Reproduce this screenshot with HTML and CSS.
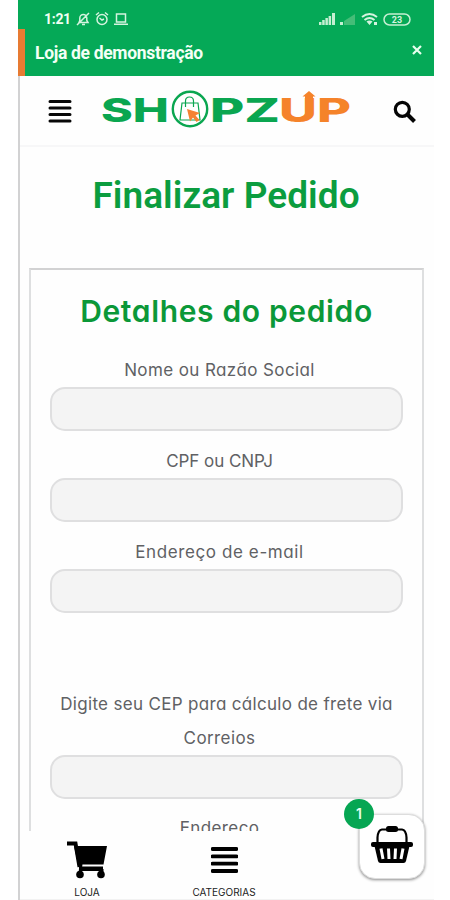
FILE: index.html
```html
<!DOCTYPE html>
<html lang="pt-BR">
<head>
<meta charset="utf-8">
<title>Finalizar Pedido</title>
<link rel="stylesheet" href="styles.css">
</head>
<body>
<div class="phone">
  <div class="status">
    <span class="clock">1:21</span>
    <svg class="status-icons" width="54" height="16" viewBox="0 0 54 16" fill="none" stroke="#d5f3df" stroke-width="1.5">
      <path d="M3 11.5h9l-1.200-2V7a3.500 3.500 0 0 0-7 0v2.500zM6 13.500h3M1 14L13 2"/>
      <circle cx="26" cy="8.500" r="5"/><path d="M23.500 7l2.500 2 2-1M20 4l3-2.500M32 4l-3-2.500"/>
      <path d="M40.500 3h9v8h-9zM38 13.300h14"/>
    </svg>
    <svg class="signals" width="94" height="16" viewBox="0 0 94 16">
      <g fill="#c5efd2"><path d="M1 11h2.500v3H1zM4.200 9h2.500v5H4.200zM7.400 7h2.500v7H7.400zM10.600 5h2.500v9h-2.500zM14 2h3v12h-3z"/><path d="M22 11h3v3h-3z"/></g>
      <path d="M26 10l11-7v11H26z" fill="#45bd78"/>
      <g fill="none" stroke="#d5f3df" stroke-width="2"><path d="M44 6q7.500-6 15 0M46.500 9q5-4 10 0"/></g>
      <path d="M48.500 10.500q3-2 6 0L51.500 14zM56 11h3v3h-3z" fill="#d5f3df"/>
      <rect x="66" y="3" width="26" height="11" rx="5.500" fill="none" stroke="#c5efd2" stroke-width="1.500"/>
      <text x="79" y="12" class="battery" text-anchor="middle">23</text>
    </svg>
  </div>
  <div class="notice"><span>Loja de demonstração</span>
    <svg class="close" width="10" height="10" viewBox="0 0 10 10"><path d="M1 1l8 8M9 1L1 9" stroke="#e8ffef" stroke-width="2.200"/></svg>
  </div>
  <header class="header">
    <svg class="menu" width="24" height="23" viewBox="0 0 24 23"><path d="M2 1.500h20M2 8h20M2 14.500h20M2 21h20" stroke="#080808" stroke-width="3" stroke-linecap="round"/></svg>
    <svg class="logo" width="250" height="40" viewBox="0 0 250 40">
      <g class="wordmark">
        <text x="-1" y="31.500" textLength="68" lengthAdjust="spacingAndGlyphs">SH</text>
        <text x="108" y="31.500" textLength="70" lengthAdjust="spacingAndGlyphs">PZ</text>
        <text class="up" x="177" y="31.500" textLength="72" lengthAdjust="spacingAndGlyphs">UP</text>
      </g>
      <circle cx="88" cy="19" r="17.200" fill="#fff" stroke="#0aa650" stroke-width="2.400"/>
      <path d="M80 13h16l2 17H78z" fill="none" stroke="#0aa650" stroke-width="1.200"/>
      <path d="M83.500 17v-6q0-4 4-4t4 4v6" fill="none" stroke="#0aa650" stroke-width="1.200"/>
      <path d="M85 19l13 4-4.500 2.500 4 4.500-3 2-3.500-4.500-3 4z" fill="#f58233"/>
      <path d="M200.500 6.500l6.500-5.500 6.500 5.500h-2.500V14h-8V6.500z" fill="#f5832a"/>
    </svg>
    <svg class="search" width="24" height="24" viewBox="0 0 24 24"><circle cx="9.300" cy="9.300" r="7" fill="none" stroke="#050505" stroke-width="3.200"/><path d="M14.500 14.500l7 7" stroke="#050505" stroke-width="4"/></svg>
  </header>
  <h1>Finalizar Pedido</h1>
  <main class="order">
    <h2>Detalhes do pedido</h2>
    <div class="field"><label class="l1" for="nome">Nome ou Razão Social</label><input id="nome"></div>
    <div class="field cpf"><label class="l2" for="cpf">CPF ou CNPJ</label><input id="cpf"></div>
    <div class="field"><label class="l3" for="email">Endereço de e-mail</label><input id="email"></div>
    <div class="field cep"><label for="cep"><span class="l4">Digite seu CEP para cálculo de frete via</span><br><span class="l5">Correios</span></label><input id="cep"></div>
    <div class="field last"><label class="l6">Endereço</label></div>
  </main>
  <nav class="nav">
    <div class="tab shop">
      <svg width="42" height="39" viewBox="0 0 42 39"><path d="M1 3.500h8.500l4 23.500" fill="none" stroke="#000" stroke-width="4"/><path d="M8 6h33l-3.500 18.500H12zM13 26.500h24V31H13z"/><path d="M15 23.500L14 34M36 29v5" stroke="#000" stroke-width="3"/><circle cx="14" cy="34.500" r="3.800"/><circle cx="35" cy="34.500" r="3.800"/></svg>
      <span>LOJA</span>
    </div>
    <div class="tab cats">
      <svg width="27" height="39" viewBox="0 0 27 39"><path d="M1.500 9h24M1.500 16.300h24M1.500 23.700h24M1.500 31h24" stroke="#000" stroke-width="3.800" stroke-linecap="round"/></svg>
      <span>CATEGORIAS</span>
    </div>
  </nav>
  <div class="basket">
    <svg width="42" height="38" viewBox="0 0 42 38"><path d="M6.500 17V12.500Q7 5 11 4.500h20Q35 5 35.500 12.500V17" fill="none" stroke="#000" stroke-width="2.200"/><rect x="15" y="1" width="12" height="6" rx="2.500"/><rect x="0" y="17" width="42" height="5" rx="2"/><path d="M3.500 21h35L35 36q-.500 2-2.500 2h-23Q7.500 38 7 36z"/><path d="M10 23.500l2 10.500M17.500 23.500l.5 10.500M24.500 23.500l-.5 10.500M32 23.500l-2 10.500" stroke="#fff" stroke-width="3"/></svg>
    <span class="badge">1</span>
  </div>
</div>
</body>
</html>
```
FILE: styles.css
```css
* { box-sizing: border-box; }
body { margin: 0; background: #fff; font-family: Inter, sans-serif; }
.phone { position: relative; width: 416px; height: 900px; margin-left: 18px; overflow: hidden; background: linear-gradient(90deg, #d2d2d3 0 2px, #fefefe 2px); display: flex; flex-direction: column; }
.status { height: 29px; flex: none; background: #05a957; display: flex; align-items: flex-start; padding: 11px 22px 0 26px; color: #effff3; }
.clock { font: 700 14px/17px Roboto, sans-serif; width: 32px; letter-spacing: -.3px; }
.signals { margin-left: auto; }
.battery { font: 700 9px Roboto, sans-serif; fill: #d5f3df; }
.notice { height: 47px; flex: none; background: #05a957; border-left: 7px solid #e77b32; padding: 13px 12px 0 10px; display: flex; justify-content: space-between; color: #f3fff6; font: 700 17.5px/22px Roboto, sans-serif; }
.notice span { letter-spacing: -.32px; }
.close { margin-top: 3px; }
.header { height: 71px; flex: none; margin-left: 2px; background: #fefefe; border-bottom: 2px solid #f7f7f8; padding: 14px 17px 0 28px; display: flex; }
.menu { margin-top: 10px; }
.logo { margin-left: 30px; }
.search { margin: 10px 0 0 auto; }
.wordmark { font: 800 33px Inter, sans-serif; fill: #0aa650; }
.wordmark .up { fill: #f5832a; }
h1 { margin: 0; height: 121px; flex: none; padding-top: 27px; text-align: center; color: #0b9d3f; font: 600 37px/44px Roboto, sans-serif; letter-spacing: .05px; }
.order { margin: 0 10px 0 11px; height: 563px; flex: none; overflow: hidden; border: 2px solid #dedfe0; border-top-color: #d2d2d3; border-bottom: 0; padding: 16px 19px 0; text-align: center; }
h2 { margin: 0 0 13px; height: 54px; color: #0b9838; font: 600 30px/50px Inter, sans-serif; letter-spacing: .65px; font-feature-settings: "cv11"; white-space: nowrap; }
.field { display: flex; flex-direction: column; margin-bottom: 13px; }
label { font-size: 17px; line-height: 34px; color: #606164; font-feature-settings: "cv11"; white-space: nowrap; }
.l1, .l2, .l3, .l5, .l6 { padding-right: 14px; }
.l1 { letter-spacing: .4px; }
.l2 { letter-spacing: -.05px; }
.l3 { letter-spacing: .6px; }
.l4 { letter-spacing: .32px; }
.l5 { letter-spacing: .4px; }
.l6 { letter-spacing: .4px; }
input { width: 100%; height: 44px; border: 2px solid #dfdfe0; border-radius: 15px; background: #f4f4f4; outline: 0; }
.cep { margin: 74px 0 12px; }
.nav { height: 69px; flex: none; margin-left: 2px; background: #fefefe; display: flex; border-bottom: 1px solid #f2f2f2; }
.tab { display: flex; flex-direction: column; align-items: center; padding-top: 9px; font: 400 10px/12px Inter, sans-serif; color: #222; }
.tab span { margin-top: 7px; }
.shop { width: 134px; }
.cats { width: 140px; }
.basket { position: absolute; left: 341px; top: 814px; width: 66px; height: 65px; border-radius: 16px; border: 1px solid #ddd; background: #fff; box-shadow: 0 1px 3px #8b8b8b; display: flex; justify-content: center; padding-top: 10px; }
.badge { position: absolute; left: -16px; top: -16px; width: 30px; height: 30px; border-radius: 50%; background: #06a653; color: #e8ffed; text-align: center; font: 600 14px/30px Inter, sans-serif; }
```
